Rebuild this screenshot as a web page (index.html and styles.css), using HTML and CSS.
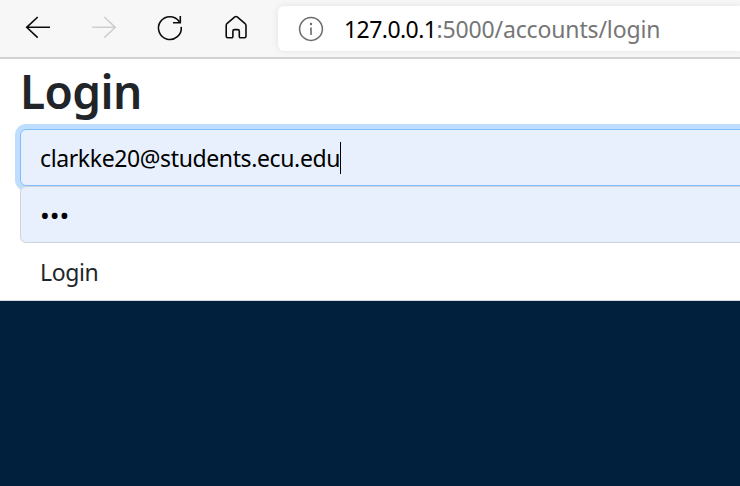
FILE: index.html
```html
<!DOCTYPE html>
<html lang="en">
<head>
<meta charset="utf-8">
<title>Login</title>
<link rel="stylesheet" href="styles.css">
</head>
<body>
<header class="toolbar">
  <svg class="nav" viewBox="0 0 270 57" aria-hidden="true">
    <g fill="none" stroke="#0c0c0c" stroke-width="1.6">
      <path d="M50 27.3H26.7M37.7 17L26.7 27.3L37.7 37.7"/>
      <path stroke="#cfcfcf" d="M92 27.3H115.300M104.300 17L115.300 27.300L104.300 37.700"/>
      <path d="M181.200 26.800A11.400 11.400 0 1 1 179.300 21.700M180.300 16V22.800H173"/>
      <path stroke-linejoin="round" d="M226.200 25.500C226.200 24.500 226.500 24 227.200 23.300L234.800 16.900Q236 16 237.200 16.900L244.800 23.300C245.500 24 246 24.500 246 25.500V36.200Q246 37.800 244.400 37.800H240.700Q239.300 37.800 239.300 36.400V31.200Q239.300 29.600 237.700 29.600H234.500Q232.900 29.600 232.900 31.200V36.400Q232.900 37.800 231.500 37.800H227.800Q226.200 37.800 226.200 36.200Z"/>
    </g>
  </svg>
  <div class="address">
    <svg class="info" viewBox="0 0 26 26" aria-hidden="true">
      <circle cx="13" cy="13" r="11.400" fill="none" stroke="#6b6b6b" stroke-width="1.500"/>
      <path d="M13 11.500V19" stroke="#6b6b6b" stroke-width="1.600"/>
      <circle cx="13" cy="8" r="1.200" fill="#6b6b6b"/>
    </svg>
    <span class="url"><span class="host">127.0.0.1</span>:5000/accounts/login</span>
  </div>
</header>
<main class="page">
  <h1>Login</h1>
  <div class="field focused"><span class="email">clarkke20@students.ecu.edu</span><i class="caret"></i></div>
  <div class="field"><span class="password">•••</span></div>
  <div class="button"><span>Login</span></div>
</main>
</body>
</html>
```
FILE: styles.css
```css
* { box-sizing: border-box; }
body {
  margin: 0;
  height: 486px;
  overflow: hidden;
  background: #00203e;
  font-family: "Noto Sans", sans-serif;
  font-size: 23px;
}
.toolbar {
  display: flex;
  height: 59px;
  padding-top: 6px;
  background: #f7f7f7;
  border-bottom: 2px solid #d2d2d2;
}
.nav {
  width: 270px;
  height: 57px;
  margin-top: -6px;
  margin-right: 8px;
  flex: none;
}
.address {
  display: flex;
  align-items: center;
  flex: 1;
  height: 45px;
  padding-left: 20px;
  background: #fff;
  border-radius: 6px 0 0 6px;
  box-shadow: 0 0 7px rgba(0, 0, 0, .09);
}
.info { width: 26px; height: 26px; flex: none; }
.url {
  margin-left: 20px;
  color: #767676;
  letter-spacing: -.14px;
  white-space: nowrap;
}
.host { color: #000; letter-spacing: -.56px; }
.page {
  height: 242px;
  padding-left: 20px;
  overflow: hidden;
  background: #fff;
  border-bottom: 1px solid #d5d9dc;
}
h1 {
  height: 70px;
  margin: 0;
  color: #212529;
  font-size: 46px;
  font-weight: 600;
  line-height: 64px;
  letter-spacing: -.6px;
}
.field {
  position: relative;
  display: flex;
  align-items: center;
  width: 760px;
  height: 57px;
  padding-left: 19px;
  background: #e8f0fe;
  border: 1px solid #ced4da;
  border-radius: 6px;
  color: #000;
}
.focused {
  border-color: #80bdff;
  box-shadow: 0 0 0 5px #bfdeff;
}
.email { letter-spacing: -.38px; }
.password { font-size: 26px; }
.caret { width: 1px; height: 32px; background: #000; }
.button {
  display: flex;
  align-items: center;
  height: 58px;
  padding-left: 20px;
  color: #212529;
  letter-spacing: -.4px;
}
```
